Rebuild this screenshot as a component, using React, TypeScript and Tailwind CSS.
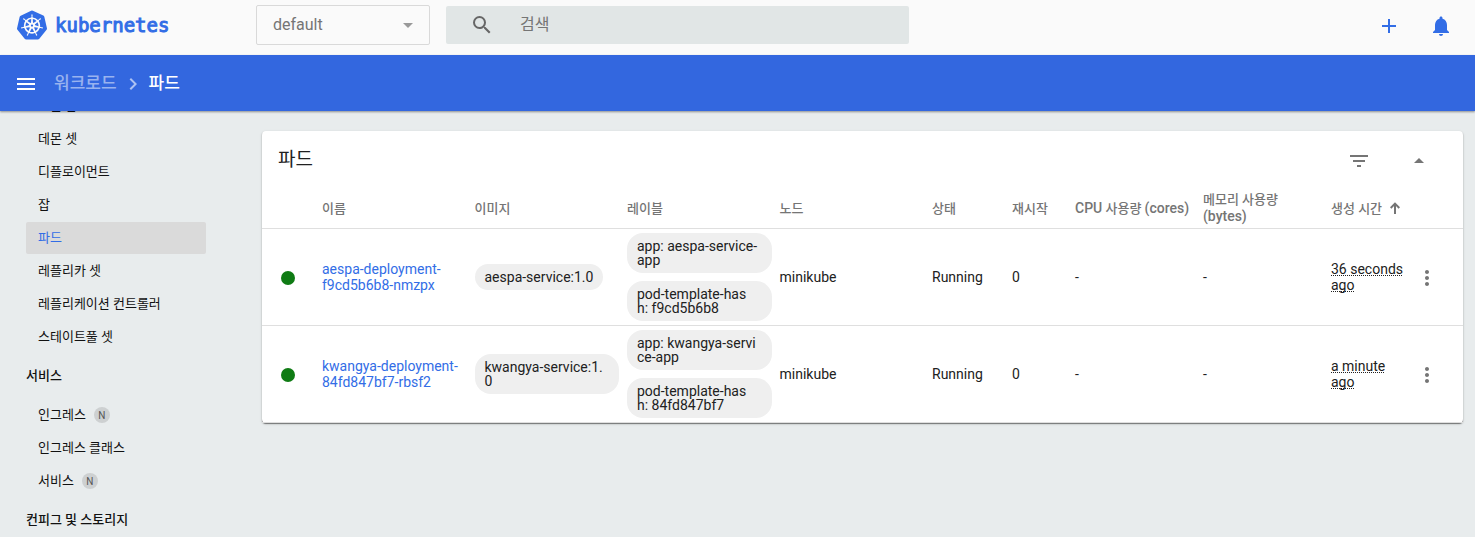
import React from "react";
import {
  MdAdd,
  MdArrowDropDown,
  MdArrowDropUp,
  MdChevronRight,
  MdFilterList,
  MdMenu,
  MdMoreVert,
  MdNotifications,
  MdSearch,
} from "react-icons/md";
import { SiKubernetes } from "react-icons/si";

type Pod = {
  name: string;
  image: string;
  labels: string[];
  node: string;
  status: string;
  restarts: number;
  age: string;
};

const pods: Pod[] = [
  {
    name: "aespa-deployment-f9cd5b6b8-nmzpx",
    image: "aespa-service:1.0",
    labels: ["app: aespa-service-app", "pod-template-has\nh: f9cd5b6b8"],
    node: "minikube",
    status: "Running",
    restarts: 0,
    age: "36 seconds ago",
  },
  {
    name: "kwangya-deployment-84fd847bf7-rbsf2",
    image: "kwangya-service:1.0",
    labels: ["app: kwangya-service-app", "pod-template-has\nh: 84fd847bf7"],
    node: "minikube",
    status: "Running",
    restarts: 0,
    age: "a minute ago",
  },
];

type NavLink = { label: string; active?: boolean; namespaced?: boolean };

const workloads: NavLink[] = [
  { label: "크론 잡" },
  { label: "데몬 셋" },
  { label: "디플로이먼트" },
  { label: "잡" },
  { label: "파드", active: true },
  { label: "레플리카 셋" },
  { label: "레플리케이션 컨트롤러" },
  { label: "스테이트풀 셋" },
];

const services: NavLink[] = [
  { label: "인그레스", namespaced: true },
  { label: "인그레스 클래스" },
  { label: "서비스", namespaced: true },
];

function NavItem({ label, active, namespaced }: NavLink) {
  return (
    <li>
      <a
        href="#"
        aria-current={active ? "page" : undefined}
        className={
          active
            ? "flex h-8 items-center gap-2 rounded-xs bg-[#dadada] px-3 text-[#326de6]"
            : "flex h-8 items-center gap-2 rounded-xs px-3"
        }
      >
        {label}
        {namespaced && (
          <span className="flex size-4 items-center justify-center rounded-full bg-[#cdd0d1] text-[10px] text-[#555]">
            N
          </span>
        )}
      </a>
    </li>
  );
}

function NavGroup({ title }: { title: string }) {
  return (
    <a href="#" className="flex h-[46px] items-center font-medium">
      {title}
    </a>
  );
}

function Chip({ children }: { children: React.ReactNode }) {
  return (
    <span className="block w-fit max-w-full rounded-2xl bg-[#efefef] px-2.5 py-1.5 text-sm leading-3.5 break-all whitespace-pre-line">
      {children}
    </span>
  );
}

function Header() {
  return (
    <header className="flex h-[55px] shrink-0 items-center bg-[#fafafa] pr-3.5 pb-[5px]">
      <a href="#" className="flex w-64 shrink-0 items-center gap-2 pl-[17px] text-[#326de6]">
        <SiKubernetes className="size-[30px]" />
        <span className="font-['DejaVu_Sans_Mono',monospace] text-[19px] leading-6 [-webkit-text-stroke:1px]">
          kubernetes
        </span>
      </a>
      <div className="relative w-[174px] shrink-0 text-[#757575]">
        <select
          aria-label="네임스페이스"
          className="block h-10 w-full appearance-none rounded-xs border border-[#d9d9d9] bg-transparent px-4 text-base"
        >
          <option>default</option>
        </select>
        <MdArrowDropDown className="pointer-events-none absolute top-2 right-2.5 size-6 text-[#999]" />
      </div>
      <label className="ml-4 flex h-[38px] max-w-[463px] flex-1 items-center gap-[26px] rounded-xs bg-[#e1e6e6] px-6 text-[#666]">
        <MdSearch className="size-6 shrink-0" />
        <input
          type="search"
          aria-label="검색"
          placeholder="검색"
          className="w-full bg-transparent text-base outline-none placeholder:text-[#757575]"
        />
      </label>
      <div className="ml-auto flex gap-3 pt-0.5 text-[#326de6]">
        <button aria-label="리소스 생성" className="flex size-10 items-center justify-center">
          <MdAdd className="size-6" />
        </button>
        <button aria-label="알림" className="flex size-10 items-center justify-center">
          <MdNotifications className="size-6" />
        </button>
      </div>
    </header>
  );
}

function Breadcrumbs() {
  return (
    <div className="relative z-10 flex h-14 shrink-0 items-center bg-[#3367df] pt-0.5 pl-3.5 text-[17px] font-medium text-white shadow-[0_1px_2px_rgba(0,0,0,0.4)]">
      <button aria-label="메뉴" className="mr-4">
        <MdMenu className="size-6" />
      </button>
      <a href="#" className="text-white/50">
        워크로드
      </a>
      <MdChevronRight className="mx-1 size-6 text-white/60" />
      <span>파드</span>
    </div>
  );
}

function Sidebar() {
  return (
    <nav className="w-64 shrink-0 overflow-hidden pr-[50px] pl-[26px] text-[13px]">
      <ul className="-mt-[21px] flex flex-col gap-px">
        {workloads.map((item) => (
          <NavItem key={item.label} {...item} />
        ))}
      </ul>
      <NavGroup title="서비스" />
      <ul className="flex flex-col gap-px">
        {services.map((item) => (
          <NavItem key={item.label} {...item} />
        ))}
      </ul>
      <NavGroup title="컨피그 및 스토리지" />
    </nav>
  );
}

function PodTable() {
  return (
    <table className="w-full table-fixed text-left text-sm text-[#212121]">
      <colgroup>
        <col className="w-[60px]" />
        <col />
        <col />
        <col />
        <col />
        <col className="w-20" />
        <col className="w-[63px]" />
        <col className="w-32" />
        <col className="w-32" />
        <col className="w-20" />
        <col className="w-[52px]" />
      </colgroup>
      <thead>
        <tr className="h-[41px] border-b border-[#dfdfdf] text-[13px] leading-[17px] text-[#757575] [&>th]:p-0 [&>th]:pt-0.5 [&>th]:font-medium">
          <th />
          <th>이름</th>
          <th>이미지</th>
          <th>레이블</th>
          <th>노드</th>
          <th>상태</th>
          <th>재시작</th>
          <th className="whitespace-nowrap">
            <span className="text-sm leading-[17px]">CPU</span> 사용량{" "}
            <span className="text-sm leading-[17px]">(cores)</span>
          </th>
          <th>
            메모리 사용량
            <br />
            <span className="text-sm leading-[17px]">(bytes)</span>
          </th>
          <th>
            <button className="flex items-center gap-2 font-medium whitespace-nowrap">
              생성 시간
              <svg viewBox="0 0 10 12" className="h-3 w-2.5" fill="none" stroke="currentColor" strokeWidth="2">
                <path d="M5 12V1.5M0.7 6 5 1.6 9.3 6" />
              </svg>
            </button>
          </th>
          <th />
        </tr>
      </thead>
      <tbody>
        {pods.map((pod) => (
          <tr key={pod.name} className="border-b border-[#dfdfdf] leading-4">
            <td className="pt-0.5">
              <span className="ml-[19px] block size-3.5 rounded-full bg-[#0f7b14]" />
            </td>
            <td className="pr-2">
              <a href="#" className="text-[#326de6]">
                {pod.name}
              </a>
            </td>
            <td className="pr-2">
              <Chip>{pod.image}</Chip>
            </td>
            <td className="py-1 pr-2">
              <div className="flex flex-col gap-2 *:w-full">
                {pod.labels.map((label) => (
                  <Chip key={label}>{label}</Chip>
                ))}
              </div>
            </td>
            <td>{pod.node}</td>
            <td>{pod.status}</td>
            <td>{pod.restarts}</td>
            <td>-</td>
            <td>-</td>
            <td>
              <span className="underline decoration-dotted decoration-1 underline-offset-1 [text-decoration-skip-ink:none]">
                {pod.age}
              </span>
            </td>
            <td className="pt-0.5">
              <button aria-label="작업" className="ml-1 block text-[#757575]">
                <MdMoreVert className="size-6" />
              </button>
            </td>
          </tr>
        ))}
      </tbody>
    </table>
  );
}

export default function App() {
  return (
    <div className="flex h-screen flex-col bg-[#e8eced] font-[Roboto,'Noto_Sans_CJK_KR',sans-serif] text-[#111]">
      <Header />
      <Breadcrumbs />
      <div className="flex min-h-0 flex-1">
        <Sidebar />
        <main className="min-w-0 flex-1 pt-5 pr-3 pl-1.5">
          <section className="rounded-sm bg-white shadow-[0_1px_1px_rgba(0,0,0,0.45),0_1px_3px_rgba(0,0,0,0.15)]">
            <div className="flex h-14 items-center pt-[3px] pr-8 pl-4">
              <h1 className="text-[19px] text-[#212121]">파드</h1>
              <button aria-label="필터" className="ml-auto text-[#757575]">
                <MdFilterList className="size-6" />
              </button>
              <button aria-label="접기" className="ml-9 text-[#757575]">
                <MdArrowDropUp className="size-6" />
              </button>
            </div>
            <PodTable />
          </section>
        </main>
      </div>
    </div>
  );
}
